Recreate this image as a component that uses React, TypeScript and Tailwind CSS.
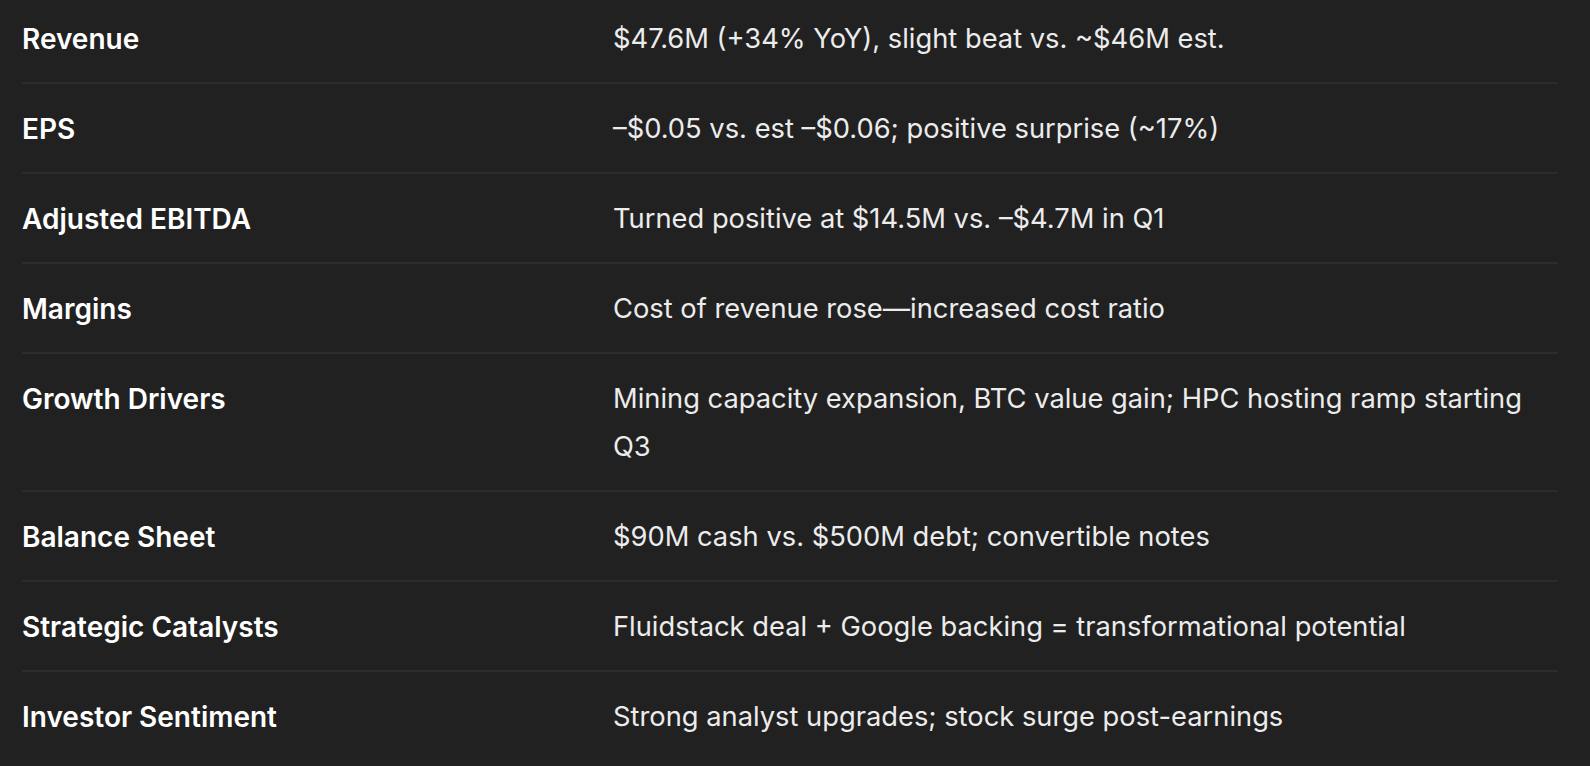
const rows: [string, string][] = [
  ['Revenue', '$47.6M (+34% YoY), slight beat vs. ~$46M est.'],
  ['EPS', '–$0.05 vs. est –$0.06; positive surprise (~17%)'],
  ['Adjusted EBITDA', 'Turned positive at $14.5M vs. –$4.7M in Q1'],
  ['Margins', 'Cost of revenue rose—increased cost ratio'],
  ['Growth Drivers', 'Mining capacity expansion, BTC value gain; HPC hosting ramp starting Q3'],
  ['Balance Sheet', '$90M cash vs. $500M debt; convertible notes'],
  ['Strategic Catalysts', 'Fluidstack deal + Google backing = transformational potential'],
  ['Investor Sentiment', 'Strong analyst upgrades; stock surge post-earnings'],
]

export default function App() {
  return (
    <div className="h-screen w-full overflow-hidden bg-[#212121] pl-[22px] font-['Inter','Noto_Sans',sans-serif] text-[#ececec]">
      <table className="w-[1536px] table-fixed border-collapse leading-[48px]">
        <colgroup>
          <col className="w-[591px]" />
          <col />
        </colgroup>
        <tbody>
          {rows.map(([label, value], i) => (
            <tr key={label} className="border-b-2 border-[#2c2c2c] last:border-b-0">
              <td className={`${i === 0 ? 'pt-[15px]' : 'pt-[21px]'} pb-[19px] align-top text-[28px] font-semibold text-white`}>
                {label}
              </td>
              <td className={`${i === 0 ? 'pt-[15px]' : 'pt-[21px]'} pb-[19px] pr-[24px] align-top text-[27.3px]`}>
                {value}
              </td>
            </tr>
          ))}
        </tbody>
      </table>
    </div>
  )
}
